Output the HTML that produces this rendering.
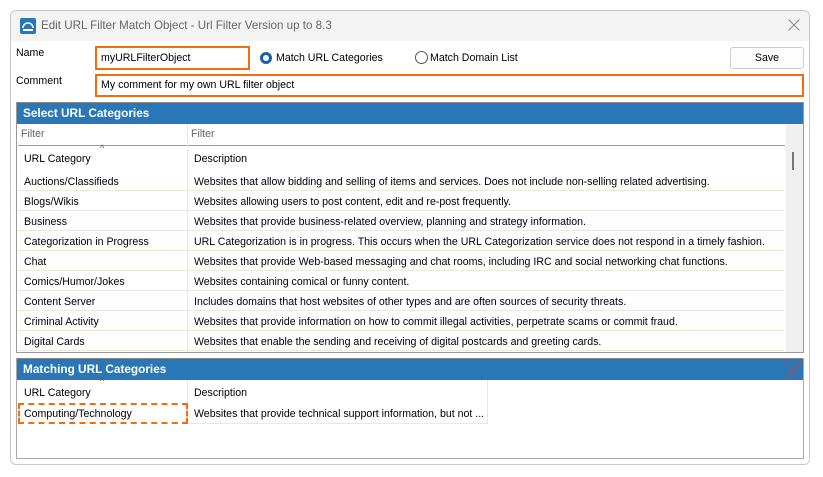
<!DOCTYPE html>
<html><head><style>
*{box-sizing:border-box;margin:0;padding:0}
body{width:823px;height:477px;background:#fff;font-family:"Liberation Sans",sans-serif;font-size:10.6px;color:#000;position:relative;overflow:hidden}
.a{position:absolute}
.win{left:10px;top:10px;width:800px;height:455px;border:1px solid #c8c8c8;border-radius:6px;background:#fff;overflow:hidden}
.title{left:0;top:0;width:798px;height:30px;background:#f3f3f3}
.ob{border:2px solid #f46d0c;background:#fff}
.hdr{background:#2a77b8;color:#fff;font-weight:bold;font-size:11.8px;padding:3px 6px}
.row{height:20px;border-bottom:1px solid #efe8d4;white-space:nowrap}
.row span{position:absolute;top:5px}
</style></head><body>
<div class="a win">
 <div class="a title"></div>
 <svg class="a" style="left:9px;top:7px" width="16" height="16"><rect width="16" height="16" rx="2" fill="#2a77b8"/><path d="M3 10 a5 5 0 0 1 10 0" stroke="#fff" stroke-width="1.5" fill="none"/><rect x="3" y="11" width="10" height="2" fill="#fff"/></svg>
 <div class="a" style="left:30px;top:8px;font-size:11.6px;color:#666">Edit URL Filter Match Object - Url Filter Version up to 8.3</div>
 <svg class="a" style="left:777px;top:8px" width="12" height="12"><path d="M0.5 0.5L11.5 11.5M11.5 0.5L0.5 11.5" stroke="#888" stroke-width="1"/></svg>
</div>
<div class="a" style="left:16px;top:47px">Name</div>
<div class="a" style="left:16px;top:75px">Comment</div>
<div class="a ob" style="left:95px;top:46px;width:155px;height:24px;padding:4px 4px">myURLFilterObject</div>
<div class="a ob" style="left:95px;top:74px;width:709px;height:23px;padding:3px 4px">My comment for my own URL filter object</div>
<div class="a" style="left:260px;top:52px;width:12px;height:12px;border-radius:50%;background:#1a5fa8;"></div>
<div class="a" style="left:263px;top:55px;width:6px;height:6px;border-radius:50%;background:#fff"></div>
<div class="a" style="left:276px;top:52px">Match URL Categories</div>
<div class="a" style="left:415px;top:51px;width:13px;height:13px;border-radius:50%;border:1px solid #555"></div>
<div class="a" style="left:430px;top:52px">Match Domain List</div>
<div class="a" style="left:730px;top:47px;width:74px;height:22px;border:1px solid #ccc;border-radius:3px;background:#fdfdfd;text-align:center;line-height:20px">Save</div>

<div class="a" style="left:16px;top:102px;width:788px;height:251px;border:1px solid #999;border-top:1px solid #888"></div>
<div class="a hdr" style="left:17px;top:103px;width:786px;height:21px">Select URL Categories</div>
<div class="a" style="left:786px;top:124px;width:17px;height:228px;background:#f0f0f0"></div>
<div class="a" style="left:792px;top:152px;width:2px;height:18px;background:#777"></div>
<div class="a" style="left:18px;top:124px;width:767px;height:22px;border-bottom:1px solid #999"></div>
<div class="a" style="left:187px;top:124px;width:1px;height:228px;background:#e6e6e6"></div>
<div class="a" style="left:21px;top:128px;color:#666">Filter</div>
<div class="a" style="left:191px;top:128px;color:#666">Filter</div>
<div class="a" style="left:100px;top:143px;font-size:9px;color:#555">^</div>
<div class="a" style="left:24px;top:153px">URL Category</div>
<div class="a" style="left:194px;top:153px">Description</div>
<div class="a" style="left:18px;top:171px;width:767px">
<div class="row" style="position:relative"><span style="left:6px">Auctions/Classifieds</span><span style="left:176px">Websites that allow bidding and selling of items and services. Does not include non-selling related advertising.</span></div>
<div class="row" style="position:relative"><span style="left:6px">Blogs/Wikis</span><span style="left:176px">Websites allowing users to post content, edit and re-post frequently.</span></div>
<div class="row" style="position:relative"><span style="left:6px">Business</span><span style="left:176px">Websites that provide business-related overview, planning and strategy information.</span></div>
<div class="row" style="position:relative"><span style="left:6px">Categorization in Progress</span><span style="left:176px">URL Categorization is in progress. This occurs when the URL Categorization service does not respond in a timely fashion.</span></div>
<div class="row" style="position:relative"><span style="left:6px">Chat</span><span style="left:176px">Websites that provide Web-based messaging and chat rooms, including IRC and social networking chat functions.</span></div>
<div class="row" style="position:relative"><span style="left:6px">Comics/Humor/Jokes</span><span style="left:176px">Websites containing comical or funny content.</span></div>
<div class="row" style="position:relative"><span style="left:6px">Content Server</span><span style="left:176px">Includes domains that host websites of other types and are often sources of security threats.</span></div>
<div class="row" style="position:relative"><span style="left:6px">Criminal Activity</span><span style="left:176px">Websites that provide information on how to commit illegal activities, perpetrate scams or commit fraud.</span></div>
<div class="row" style="position:relative"><span style="left:6px">Digital Cards</span><span style="left:176px">Websites that enable the sending and receiving of digital postcards and greeting cards.</span></div>
</div>

<div class="a" style="left:16px;top:358px;width:788px;height:101px;border:1px solid #aaa;border-top:1px solid #888"></div>
<div class="a hdr" style="left:17px;top:359px;width:786px;height:21px">Matching URL Categories</div>
<svg class="a" style="left:784px;top:361px" width="18" height="18"><path d="M1 1L17 17M17 1L1 17" stroke="#b04a5a" stroke-width="1"/></svg>
<div class="a" style="left:187px;top:380px;width:1px;height:44px;background:#e6e6e6"></div>
<div class="a" style="left:487px;top:380px;width:1px;height:44px;background:#e6e6e6"></div>
<div class="a" style="left:100px;top:376px;font-size:9px;color:#555">^</div>
<div class="a" style="left:24px;top:387px">URL Category</div>
<div class="a" style="left:194px;top:387px">Description</div>
<div class="a" style="left:188px;top:423px;width:300px;height:1px;background:#efe8d4"></div>
<div class="a" style="left:18px;top:403px;width:170px;height:21px;border:2px dashed #f46d0c"></div>
<div class="a" style="left:24px;top:408px">Computing/Technology</div>
<div class="a" style="left:194px;top:408px">Websites that provide technical support information, but not ...</div>
</body></html>
